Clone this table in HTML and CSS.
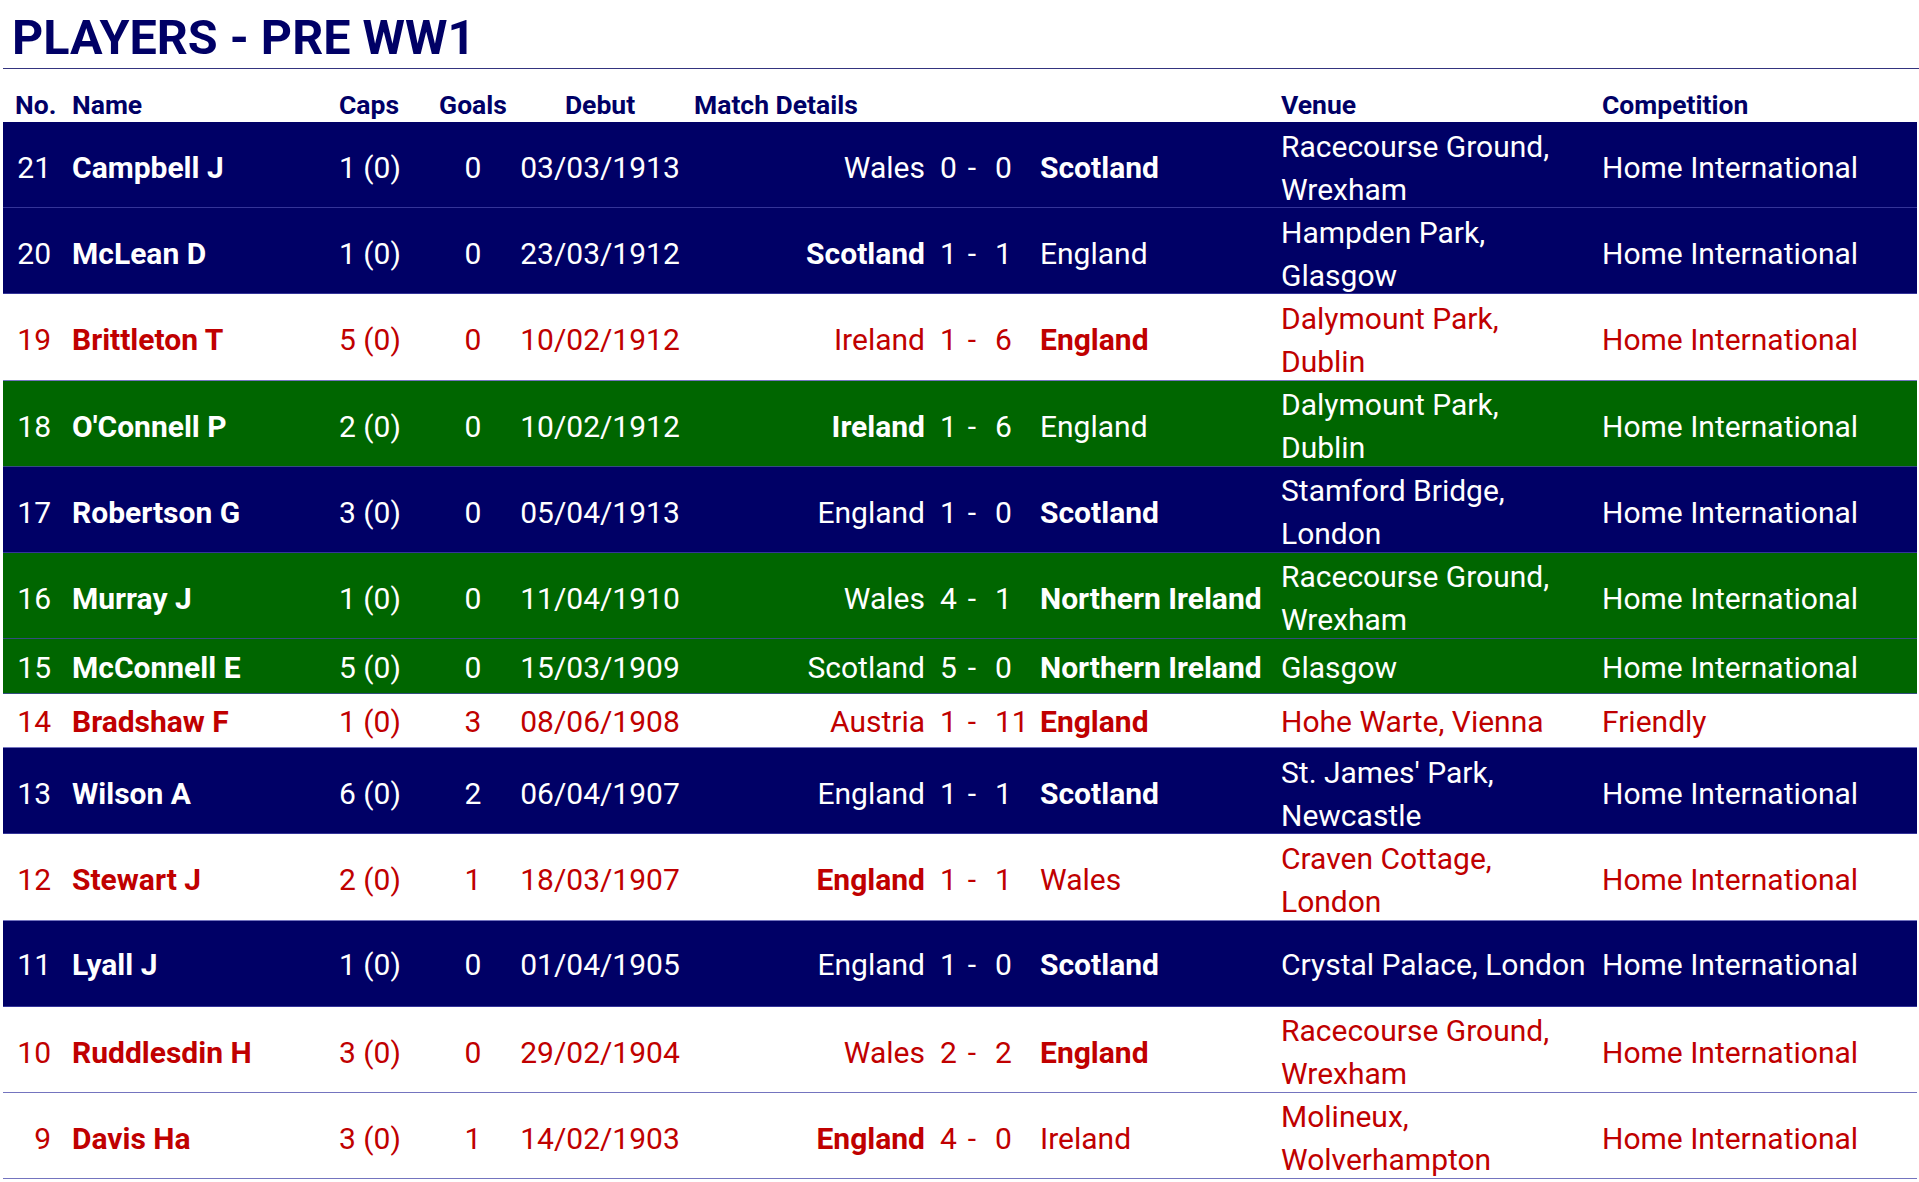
FILE: index.html
```html
<!DOCTYPE html>
<html lang="en">
<head>
<meta charset="utf-8">
<title>Players - Pre WW1</title>
<link rel="stylesheet" href="styles.css">
</head>
<body>
<div class="sheet">
  <h1 class="title">PLAYERS - PRE WW1</h1>
  <div class="grid head">
    <div class="h-no">No.</div>
    <div class="h-name">Name</div>
    <div class="h-caps">Caps</div>
    <div class="h-goals">Goals</div>
    <div class="h-debut">Debut</div>
    <div class="h-match">Match Details</div>
    <div class="h-venue">Venue</div>
    <div class="h-comp">Competition</div>
  </div>

  <div class="grid row navy">
    <div class="c-no">21</div><div class="c-name">Campbell J</div><div class="c-caps">1 (0)</div><div class="c-goals">0</div><div class="c-debut">03/03/1913</div>
    <div class="c-home">Wales</div><div class="c-score"><span>0</span><span class="dash">-</span><span class="away">0</span></div><div class="c-away b">Scotland</div>
    <div class="c-venue">Racecourse Ground, Wrexham</div><div class="c-comp">Home International</div>
  </div>
  <div class="grid row navy">
    <div class="c-no">20</div><div class="c-name">McLean D</div><div class="c-caps">1 (0)</div><div class="c-goals">0</div><div class="c-debut">23/03/1912</div>
    <div class="c-home b">Scotland</div><div class="c-score"><span>1</span><span class="dash">-</span><span class="away">1</span></div><div class="c-away">England</div>
    <div class="c-venue">Hampden Park, Glasgow</div><div class="c-comp">Home International</div>
  </div>
  <div class="grid row white">
    <div class="c-no">19</div><div class="c-name">Brittleton T</div><div class="c-caps">5 (0)</div><div class="c-goals">0</div><div class="c-debut">10/02/1912</div>
    <div class="c-home">Ireland</div><div class="c-score"><span>1</span><span class="dash">-</span><span class="away">6</span></div><div class="c-away b">England</div>
    <div class="c-venue">Dalymount Park, Dublin</div><div class="c-comp">Home International</div>
  </div>
  <div class="grid row green">
    <div class="c-no">18</div><div class="c-name">O'Connell P</div><div class="c-caps">2 (0)</div><div class="c-goals">0</div><div class="c-debut">10/02/1912</div>
    <div class="c-home b">Ireland</div><div class="c-score"><span>1</span><span class="dash">-</span><span class="away">6</span></div><div class="c-away">England</div>
    <div class="c-venue">Dalymount Park, Dublin</div><div class="c-comp">Home International</div>
  </div>
  <div class="grid row navy">
    <div class="c-no">17</div><div class="c-name">Robertson G</div><div class="c-caps">3 (0)</div><div class="c-goals">0</div><div class="c-debut">05/04/1913</div>
    <div class="c-home">England</div><div class="c-score"><span>1</span><span class="dash">-</span><span class="away">0</span></div><div class="c-away b">Scotland</div>
    <div class="c-venue">Stamford Bridge, London</div><div class="c-comp">Home International</div>
  </div>
  <div class="grid row green">
    <div class="c-no">16</div><div class="c-name">Murray J</div><div class="c-caps">1 (0)</div><div class="c-goals">0</div><div class="c-debut">11/04/1910</div>
    <div class="c-home">Wales</div><div class="c-score"><span>4</span><span class="dash">-</span><span class="away">1</span></div><div class="c-away b">Northern Ireland</div>
    <div class="c-venue">Racecourse Ground, Wrexham</div><div class="c-comp">Home International</div>
  </div>
  <div class="grid row green short">
    <div class="c-no">15</div><div class="c-name">McConnell E</div><div class="c-caps">5 (0)</div><div class="c-goals">0</div><div class="c-debut">15/03/1909</div>
    <div class="c-home">Scotland</div><div class="c-score"><span>5</span><span class="dash">-</span><span class="away">0</span></div><div class="c-away b">Northern Ireland</div>
    <div class="c-venue">Glasgow</div><div class="c-comp">Home International</div>
  </div>
  <div class="grid row white short">
    <div class="c-no">14</div><div class="c-name">Bradshaw F</div><div class="c-caps">1 (0)</div><div class="c-goals">3</div><div class="c-debut">08/06/1908</div>
    <div class="c-home">Austria</div><div class="c-score"><span>1</span><span class="dash">-</span><span class="away">11</span></div><div class="c-away b">England</div>
    <div class="c-venue">Hohe Warte, Vienna</div><div class="c-comp">Friendly</div>
  </div>
  <div class="grid row navy">
    <div class="c-no">13</div><div class="c-name">Wilson A</div><div class="c-caps">6 (0)</div><div class="c-goals">2</div><div class="c-debut">06/04/1907</div>
    <div class="c-home">England</div><div class="c-score"><span>1</span><span class="dash">-</span><span class="away">1</span></div><div class="c-away b">Scotland</div>
    <div class="c-venue">St. James' Park, Newcastle</div><div class="c-comp">Home International</div>
  </div>
  <div class="grid row white">
    <div class="c-no">12</div><div class="c-name">Stewart J</div><div class="c-caps">2 (0)</div><div class="c-goals">1</div><div class="c-debut">18/03/1907</div>
    <div class="c-home b">England</div><div class="c-score"><span>1</span><span class="dash">-</span><span class="away">1</span></div><div class="c-away">Wales</div>
    <div class="c-venue">Craven Cottage, London</div><div class="c-comp">Home International</div>
  </div>
  <div class="grid row navy">
    <div class="c-no">11</div><div class="c-name">Lyall J</div><div class="c-caps">1 (0)</div><div class="c-goals">0</div><div class="c-debut">01/04/1905</div>
    <div class="c-home">England</div><div class="c-score"><span>1</span><span class="dash">-</span><span class="away">0</span></div><div class="c-away b">Scotland</div>
    <div class="c-venue">Crystal Palace, London</div><div class="c-comp">Home International</div>
  </div>
  <div class="grid row white">
    <div class="c-no">10</div><div class="c-name">Ruddlesdin H</div><div class="c-caps">3 (0)</div><div class="c-goals">0</div><div class="c-debut">29/02/1904</div>
    <div class="c-home">Wales</div><div class="c-score"><span>2</span><span class="dash">-</span><span class="away">2</span></div><div class="c-away b">England</div>
    <div class="c-venue">Racecourse Ground, Wrexham</div><div class="c-comp">Home International</div>
  </div>
  <div class="grid row white">
    <div class="c-no">9</div><div class="c-name">Davis Ha</div><div class="c-caps">3 (0)</div><div class="c-goals">1</div><div class="c-debut">14/02/1903</div>
    <div class="c-home b">England</div><div class="c-score"><span>4</span><span class="dash">-</span><span class="away">0</span></div><div class="c-away">Ireland</div>
    <div class="c-venue">Molineux, Wolverhampton</div><div class="c-comp">Home International</div>
  </div>
</div>
</body>
</html>
```

FILE: styles.css
```css
html, body {
  margin: 0;
  padding: 0;
  background: #ffffff;
}

body {
  font-family: Roboto, "Liberation Sans", sans-serif;
  color: #000066;
  overflow: hidden;
}

.sheet {
  padding-left: 3px;
}

.title {
  margin: 0;
  height: 54px;
  padding-top: 14px;
  font-size: 48.5px;
  line-height: 48px;
  font-weight: 700;
  letter-spacing: 0;
  padding-left: 9px;
  color: #000066;
  border-bottom: 1px solid #34347f;
  box-sizing: content-box;
}

.grid {
  display: grid;
  grid-template-columns: 57px 270px 98px 90px 164px 243px 105px 251px 321px 315px;
  width: 1914px;
}

.head {
  height: 53px;
  align-items: end;
  font-size: 26.5px;
  font-weight: 700;
  line-height: 32px;
  color: #000066;
  padding-bottom: 1px;
  box-sizing: border-box;
}

.h-no { padding-left: 12px; }
.h-name { padding-left: 12px; }
.h-caps { padding-left: 9px; }
.h-goals { text-align: center; }
.h-debut { text-align: center; }
.h-match { grid-column: span 3; padding-left: 12px; }

.row {
  height: 86.2px;
  padding-top: 2.5px;
  align-items: center;
  font-size: 30px;
  line-height: 43px;
  border-bottom: 1px solid rgba(70, 70, 170, 0.75);
  box-sizing: border-box;
  white-space: nowrap;
}

.row.short {
  height: 54.5px;
}

.navy {
  background: #000066;
  color: #ffffff;
}

.green {
  background: #006600;
  color: #ffffff;
}

.white {
  background: #ffffff;
  color: #c00000;
}

.c-no {
  text-align: right;
  padding-right: 9px;
}

.c-name {
  padding-left: 12px;
  font-weight: 700;
}

.c-caps {
  padding-left: 9px;
}

.c-goals {
  text-align: center;
}

.c-debut {
  display: flex;
  justify-content: center;
}

.c-home {
  text-align: right;
}

.c-score {
  display: grid;
  grid-template-columns: 17px 30px auto;
  padding-left: 15px;
}

.c-score .dash {
  text-align: center;
}

.c-score .away {
  padding-left: 8px;
}

.c-away {
  padding-left: 10px;
}

.b {
  font-weight: 700;
}

.c-venue {
  white-space: normal;
  padding-right: 15px;
}
```
